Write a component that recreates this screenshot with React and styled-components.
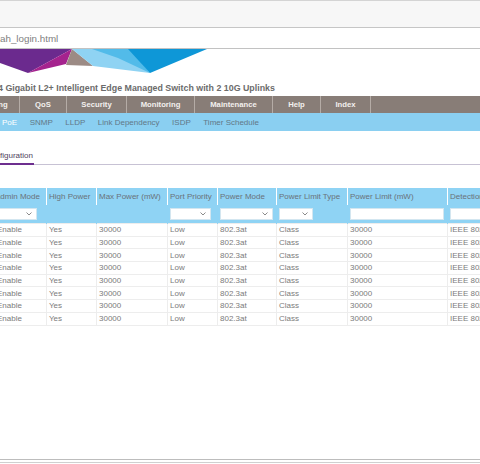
import styled, { createGlobalStyle } from "styled-components"

const GlobalStyle = createGlobalStyle`
  html, body {
    margin: 0;
    padding: 0;
    background: #fff;
  }
  body {
    font-family: "Liberation Sans", Arial, sans-serif;
  }
`

const Page = styled.div`
  width: 480px;
  height: 464px;
  overflow: hidden;
  display: flex;
  flex-direction: column;
  background: #fff;
`

const Toolbar = styled.div`
  flex: none;
  height: 26px;
  background: #f7f7f7;
  border-top: 1px solid #d4d4d4;
  border-bottom: 1px solid #c6c6c6;
`

const AddressBar = styled.div`
  flex: none;
  height: 20px;
  display: flex;
  align-items: center;
  font-size: 9.8px;
  color: #808080;
  border-bottom: 1px solid #c2c2c2;
`

const Banner = styled.svg`
  display: block;
  flex: none;
`

const Title = styled.h1`
  margin: 0 0 0 -2px;
  padding: 8px 0 2px;
  font-size: 8.85px;
  line-height: 12px;
  font-weight: bold;
  color: #6b6b6b;
  white-space: nowrap;
`

const MainNav = styled.nav`
  display: flex;
  height: 17px;
  margin-left: -40px;
  background: #887d77;
`

const NavItem = styled.div`
  flex: none;
  box-sizing: border-box;
  width: ${(p) => p.$w}px;
  display: flex;
  align-items: center;
  justify-content: center;
  border-right: 1px solid #b5aca6;
  color: #f3f0ee;
  font-size: 7.7px;
  font-weight: bold;
  white-space: nowrap;
`

const SubNav = styled.nav`
  display: flex;
  align-items: center;
  gap: 12.5px;
  height: 18px;
  padding-left: 2px;
  background: #8acff1;
`

const SubItem = styled.span`
  font-size: 8px;
  color: ${(p) => (p.$active ? "#ffffff" : "#627887")};
  white-space: nowrap;
`

const TabBar = styled.div`
  display: flex;
  margin-top: 20px;
  border-bottom: 1px solid #c7c2d4;
`

const Tab = styled.div`
  margin-left: -14.7px;
  margin-bottom: -1px;
  padding: 0 1px 2px 0;
  font-size: 8px;
  line-height: 10px;
  color: #4f4260;
  border-bottom: 2px solid #6d2f8f;
  white-space: nowrap;
`

const Table = styled.table`
  margin: 23px 0 0 -8px;
  width: 535px;
  table-layout: fixed;
  border-collapse: collapse;
  font-size: 8px;
`

const HeadCell = styled.th`
  height: 17px;
  padding: 0 2px;
  background: #8fd3f4;
  border-left: 1px solid #fff;
  border-right: 1px solid #fff;
  color: #69727a;
  font-weight: normal;
  text-align: left;
  white-space: nowrap;
  overflow: hidden;
`

const FilterCell = styled.td`
  height: 18px;
  padding: 0 2px;
  background: #8fd3f4;
  border-left: 1px solid #8fd3f4;
  border-right: 1px solid #8fd3f4;
`

const Cell = styled.td`
  height: 11.7px;
  padding: 0 2px;
  border: 1px solid #ededed;
  color: #7b7b7b;
  white-space: nowrap;
  overflow: hidden;

  &:first-child {
    padding-left: 4px;
  }
`

const SelectBox = styled.div`
  box-sizing: border-box;
  width: ${(p) => p.$w}px;
  height: 12px;
  margin-left: ${(p) => p.$shift || 0}px;
  display: flex;
  align-items: center;
  justify-content: flex-end;
  padding-right: 4px;
  background: #fff;
  border: 1px solid #d3e6f0;
`

const TextBox = styled.div`
  box-sizing: border-box;
  width: ${(p) => p.$w}px;
  height: 12px;
  background: #fff;
  border: 1px solid #d3e6f0;
`

const StatusBar = styled.div`
  flex: none;
  margin-top: auto;
  height: 2px;
  border-top: 1px solid #bdbdbd;
  border-bottom: 1px solid #d0d0d0;
  margin-bottom: 1px;
`

function Chevron() {
  return (
    <svg width="6" height="4" viewBox="0 0 6 4">
      <polyline points="0.5,0.5 3,3 5.5,0.5" fill="none" stroke="#8a8a8a" strokeWidth="1" />
    </svg>
  )
}

function Select({ w, shift }) {
  return (
    <SelectBox $w={w} $shift={shift}>
      <Chevron />
    </SelectBox>
  )
}

const navItems = [
  ["Switching", 60],
  ["QoS", 47],
  ["Security", 60],
  ["Monitoring", 68],
  ["Maintenance", 78],
  ["Help", 48],
  ["Index", 50],
]

const subItems = ["PoE", "SNMP", "LLDP", "Link Dependency", "ISDP", "Timer Schedule"]

const columns = [
  ["Admin Mode", 54],
  ["High Power", 50],
  ["Max Power (mW)", 71],
  ["Port Priority", 50],
  ["Power Mode", 59],
  ["Power Limit Type", 71],
  ["Power Limit (mW)", 100],
  ["Detection Type", 80],
]

const row = ["Enable", "Yes", "30000", "Low", "802.3at", "Class", "30000", "IEEE 802.3at"]
const rows = Array.from({ length: 8 }, () => row)

export default function App() {
  return (
    <Page>
      <GlobalStyle />
      <Toolbar />
      <AddressBar>ah_login.html</AddressBar>

      <Banner width="480" height="25" viewBox="0 0 480 25">
        <polygon points="0,0 72,0 28,24 0,14" fill="#6b2a8e" />
        <polygon points="72,0 66,15 28,24" fill="#a5238e" />
        <polygon points="72,0 66,16 93,17" fill="#9c8b85" />
        <polygon points="72,0 130,0 150,24 93,17" fill="#8fd3f3" />
        <polygon points="92,0 130,0 150,24 118,9" fill="#52bbe9" />
        <polygon points="128,0 207,0 150,24" fill="#0e97d7" />
      </Banner>

      <Title>4 Gigabit L2+ Intelligent Edge Managed Switch with 2 10G Uplinks</Title>

      <MainNav>
        {navItems.map(([label, w]) => (
          <NavItem key={label} $w={w}>
            {label}
          </NavItem>
        ))}
      </MainNav>

      <SubNav>
        {subItems.map((label) => (
          <SubItem key={label} $active={label === "PoE"}>
            {label}
          </SubItem>
        ))}
      </SubNav>

      <TabBar>
        <Tab>Configuration</Tab>
      </TabBar>

      <Table>
        <colgroup>
          {columns.map(([label, w]) => (
            <col key={label} style={{ width: w }} />
          ))}
        </colgroup>
        <thead>
          <tr>
            {columns.map(([label]) => (
              <HeadCell key={label}>{label}</HeadCell>
            ))}
          </tr>
          <tr>
            <FilterCell>
              <Select w={41} shift={1} />
            </FilterCell>
            <FilterCell />
            <FilterCell />
            <FilterCell>
              <Select w={41} />
            </FilterCell>
            <FilterCell>
              <Select w={53} />
            </FilterCell>
            <FilterCell>
              <Select w={34} />
            </FilterCell>
            <FilterCell>
              <TextBox $w={94} />
            </FilterCell>
            <FilterCell>
              <TextBox $w={76} />
            </FilterCell>
          </tr>
        </thead>
        <tbody>
          {rows.map((r, i) => (
            <tr key={i}>
              {r.map((v, j) => (
                <Cell key={j}>{v}</Cell>
              ))}
            </tr>
          ))}
        </tbody>
      </Table>

      <StatusBar />
    </Page>
  )
}
